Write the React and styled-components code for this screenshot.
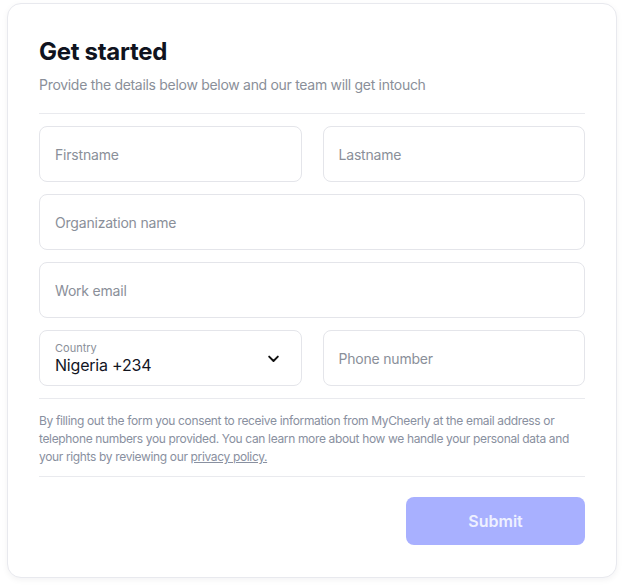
import { createGlobalStyle } from "styled-components";
import styled from "styled-components";

const GlobalStyle = createGlobalStyle`
  body {
    margin: 0;
    background: #ffffff;
    font-family: "Inter", "Liberation Sans", sans-serif;
  }
`;

const Page = styled.div`
  padding: 3px 7px 10px 7px;
`;

const Card = styled.div`
  width: 610px;
  box-sizing: border-box;
  padding: 33px 31px 32px 31px;
  border: 1px solid #e8e9ee;
  border-radius: 14px;
  box-shadow: 0 2px 6px rgba(20, 24, 40, 0.05);
  background: #fff;
`;

const Title = styled.h2`
  margin: 0;
  font-size: 24px;
  font-weight: 700;
  color: #0f1320;
  letter-spacing: -0.3px;
`;

const Subtitle = styled.p`
  margin: 10px 0 0;
  font-size: 14px;
  color: #8a8f99;
  letter-spacing: -0.3px;
`;

const Divider = styled.hr`
  border: none;
  border-top: 1px solid #e9eaee;
  margin: ${(p) => p.$m || "20px 0 12px"};
`;

const Row = styled.div`
  display: grid;
  grid-template-columns: ${(p) => (p.$split ? "1fr 1fr" : "1fr")};
  gap: 21px;
  margin-bottom: 12px;
  &:last-of-type {
    margin-bottom: 0;
  }
`;

const Field = styled.div`
  height: 56px;
  box-sizing: border-box;
  border: 1px solid #e4e5ea;
  border-radius: 8px;
  padding: 0 15px;
  display: flex;
  align-items: center;
  justify-content: space-between;
`;

const Input = styled.input`
  border: none;
  outline: none;
  width: 100%;
  font-family: inherit;
  font-size: 14px;
  letter-spacing: -0.2px;
  color: #1a1d26;
  background: transparent;
  padding: 0;
  &::placeholder {
    color: #8a8f99;
  }
`;

const SelectText = styled.div`
  display: flex;
  flex-direction: column;
`;

const SmallLabel = styled.span`
  font-size: 11px;
  color: #8a8f99;
  line-height: 13px;
`;

const Value = styled.span`
  font-size: 16px;
  color: #12151f;
  line-height: 20px;
  letter-spacing: -0.2px;
`;

const ChevronWrap = styled.span`
  display: flex;
  margin-right: 6px;
`;

const Fine = styled.p`
  margin: 0;
  font-size: 12px;
  line-height: 18px;
  letter-spacing: -0.35px;
  color: #8990a0;
`;

const Link = styled.a`
  color: #8990a0;
  text-decoration: underline;
`;

const Footer = styled.div`
  display: flex;
  justify-content: flex-end;
`;

const SubmitButton = styled.button`
  width: 179px;
  height: 48px;
  border: none;
  border-radius: 8px;
  background: #a8b0ff;
  color: #eef0ff;
  font-family: inherit;
  font-size: 16px;
  font-weight: 600;
  cursor: pointer;
`;

function Chevron() {
  return (
    <svg width="13" height="13" viewBox="0 0 24 24" fill="none" stroke="#111" strokeWidth="3.6" strokeLinecap="round" strokeLinejoin="round">
      <path d="M4 8.5l8 8 8-8" />
    </svg>
  );
}

export default function App() {
  return (
    <Page>
      <GlobalStyle />
      <Card>
        <Title>Get started</Title>
        <Subtitle>Provide the details below below and our team will get intouch</Subtitle>
        <Divider />
        <Row $split>
          <Field><Input placeholder="Firstname" /></Field>
          <Field><Input placeholder="Lastname" /></Field>
        </Row>
        <Row>
          <Field><Input placeholder="Organization name" /></Field>
        </Row>
        <Row>
          <Field><Input placeholder="Work email" /></Field>
        </Row>
        <Row $split>
          <Field>
            <SelectText>
              <SmallLabel>Country</SmallLabel>
              <Value>Nigeria +234</Value>
            </SelectText>
            <ChevronWrap><Chevron /></ChevronWrap>
          </Field>
          <Field><Input placeholder="Phone number" /></Field>
        </Row>
        <Divider $m="11px 0 13px" />
        <Fine>
          By filling out the form you consent to receive information from MyCheerly at the email address or
          <br />
          telephone numbers you provided. You can learn more about how we handle your personal data and
          <br />
          your rights by reviewing our <Link href="#">privacy policy.</Link>
        </Fine>
        <Divider $m="10px 0 20px" />
        <Footer>
          <SubmitButton>Submit</SubmitButton>
        </Footer>
      </Card>
    </Page>
  );
}
